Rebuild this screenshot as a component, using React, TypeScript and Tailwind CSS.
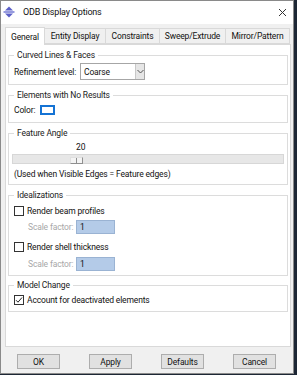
import React from "react";

const font = { fontFamily: "Roboto, 'Noto Sans', sans-serif" };
const txt = "text-[8.5px] leading-[12px] tracking-[-0.15px] whitespace-nowrap";

function Group({ title, children, className = "" }: { title: string; children: React.ReactNode; className?: string }) {
  return (
    <fieldset className={`mx-[2px] border border-[#dcdcdc] pl-[5px] pr-[5px] ${className}`}>
      <legend className={`px-[3px] ${txt} text-[#1a1a1a]`}>{title}</legend>
      {children}
    </fieldset>
  );
}

function Checkbox({ checked, label }: { checked?: boolean; label: string }) {
  return (
    <div className="flex items-center h-[12px]">
      <div className="w-[10px] h-[10px] border border-[#333] bg-white flex items-center justify-center shrink-0">
        {checked && (
          <svg width="8" height="8" viewBox="0 0 8 8">
            <path d="M1 4.2 L3 6.2 L7 1.5" stroke="#222" strokeWidth="1" fill="none" />
          </svg>
        )}
      </div>
      <span className={`ml-[3px] ${txt} text-[#111]`}>{label}</span>
    </div>
  );
}

function ScaleRow() {
  return (
    <div className="flex items-center h-[14px] pl-[14px]">
      <span className={`${txt} text-[#a8a8a8] w-[48px] shrink-0`}>Scale factor:</span>
      <div className={`w-[39px] h-[14px] bg-[#b4cbe8] border border-[#9ab3d3] ${txt} pl-[3px] text-[#111]`}>1</div>
    </div>
  );
}

function Btn({ label }: { label: string }) {
  return (
    <div className={`w-[43px] h-[15px] bg-[#e1e1e1] border border-[#adadad] flex items-center justify-center ${txt} text-[#111] shrink-0`}>
      {label}
    </div>
  );
}

export default function App() {
  const tabs = [
    { label: "Entity Display", w: 61 },
    { label: "Constraints", w: 54 },
    { label: "Sweep/Extrude", w: 66 },
    { label: "Mirror/Pattern", w: 64 },
  ];
  return (
    <div className="w-[297px] h-[375px] bg-[#1d2735] flex overflow-hidden" style={font}>
      <div className="w-[294px] h-[374px] shrink-0 bg-[#f0f0f0] border border-[#8a8a8a] flex flex-col">
        {/* Title bar */}
        <div className="h-[23px] shrink-0 bg-white flex items-center">
          <svg width="12" height="12" viewBox="0 0 12 12" className="ml-[2px] mt-[-2px]">
            <path d="M6 0.5 L10 4.5 L2 4.5 Z" fill="#5b5fc7" />
            <path d="M6 11.5 L10 7.5 L2 7.5 Z" fill="#5b5fc7" />
            <rect x="0.5" y="5.3" width="11" height="1.4" fill="#6a6fd0" />
          </svg>
          <span className="ml-[8px] text-[9px] leading-[12px] tracking-[-0.2px] whitespace-nowrap text-[#111] mt-[-2px]">ODB Display Options</span>
          <svg width="9" height="9" viewBox="0 0 9 9" className="ml-auto mr-[6px] mt-[-1px]">
            <path d="M1 1 L8 8 M8 1 L1 8" stroke="#333" strokeWidth="1" />
          </svg>
        </div>
        {/* Tabs */}
        <div className="pl-[4px] pt-[3px] flex items-end h-[20px] shrink-0">
          <div className={`w-[40px] h-[18px] bg-white border border-b-0 border-[#d9d9d9] flex items-center justify-center ${txt} text-[#111] relative z-10 mb-[-1px]`}>
            General
          </div>
          {tabs.map((t) => (
            <div
              key={t.label}
              style={{ width: t.w }}
              className={`h-[16px] bg-[#f0f0f0] border border-l-0 border-[#d9d9d9] flex items-center justify-center ${txt} text-[#111]`}
            >
              {t.label}
            </div>
          ))}
        </div>
        {/* Panel */}
        <div className="ml-[4px] w-[286px] h-[303px] shrink-0 bg-white border border-[#d9d9d9] pt-[4px]">
          <Group title="Curved Lines & Faces" className="pb-[4px]">
            <div className="flex items-center h-[17px] mt-[2px]">
              <span className={`${txt} text-[#111] w-[66px] shrink-0`}>Refinement level:</span>
              <div className="w-[65px] h-[17px] border border-[#a6a6a6] bg-white flex items-center">
                <span className={`${txt} pl-[3px] text-[#111] flex-1`}>Coarse</span>
                <div className="w-[9px] h-full bg-[#e6e6e6] border-l border-[#c8c8c8] flex items-center justify-center">
                  <svg width="7" height="5" viewBox="0 0 7 5">
                    <path d="M0.5 1 L3.5 4 L6.5 1" stroke="#555" fill="none" strokeWidth="1" />
                  </svg>
                </div>
              </div>
            </div>
          </Group>
          <Group title="Elements with No Results" className="mt-[4px] pb-[6px]">
            <div className="flex items-center h-[12px] mt-[3px]">
              <span className={`${txt} text-[#111] w-[26px] shrink-0`}>Color:</span>
              <div className="w-[15px] h-[10px] border-[2px] border-[#1573d4] bg-white" />
            </div>
          </Group>
          <Group title="Feature Angle" className="mt-[4px] pb-[4px]">
            <div className="h-[10px] text-[8.5px] leading-[10px] text-[#111] pl-[62px] mt-[3px]">20</div>
            <div className="h-[10px] mt-[2px] mx-[-2px] bg-[#e7e7e7] border border-[#d7d7d7] flex items-center">
              <div className="ml-[57px] mt-[2px] w-[13px] h-[7px] bg-[#f4f4f4] border border-[#8f8f8f] border-t-[#e0e0e0] border-l-[#e0e0e0] flex">
                <div className="w-[6px] h-full border-r border-[#8f8f8f]" />
              </div>
            </div>
            <div className={`${txt} text-[#111] mt-[4px]`}>(Used when Visible Edges = Feature edges)</div>
          </Group>
          <Group title="Idealizations" className="mt-[4px] pb-[4px]">
            <div className="mt-[4px]">
              <Checkbox label="Render beam profiles" />
            </div>
            <div className="mt-[3px]">
              <ScaleRow />
            </div>
            <div className="mt-[7px]">
              <Checkbox label="Render shell thickness" />
            </div>
            <div className="mt-[4px]">
              <ScaleRow />
            </div>
          </Group>
          <Group title="Model Change" className="mt-[3px] pb-[5px]">
            <div className="mt-[3px]">
              <Checkbox checked label="Account for deactivated elements" />
            </div>
          </Group>
        </div>
        {/* Buttons */}
        <div className="flex pl-[16px] gap-[29px] mt-[7px]">
          <Btn label="OK" />
          <Btn label="Apply" />
          <Btn label="Defaults" />
          <Btn label="Cancel" />
        </div>
      </div>
    </div>
  );
}
